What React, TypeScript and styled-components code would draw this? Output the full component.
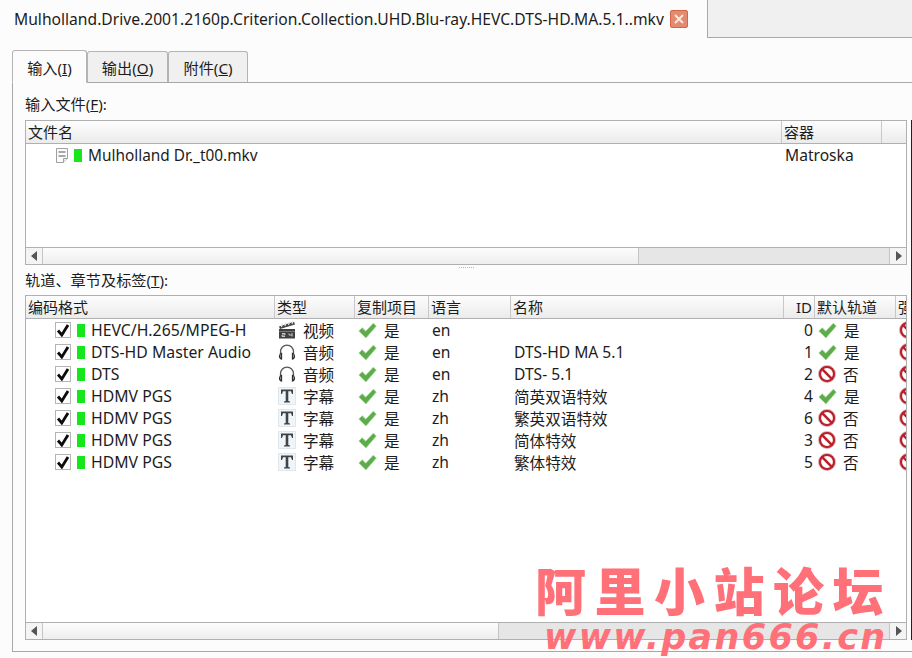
import React from "react";
import styled, { createGlobalStyle } from "styled-components";

const Global = createGlobalStyle`
  html, body { margin: 0; padding: 0; background: #fcfcfc; }
  body { width: 912px; height: 658px; overflow: hidden; font-family: "Noto Sans", "Noto Sans CJK SC", sans-serif; font-size: 15.5px; color: #1c1c1c; }
  u { text-underline-offset: 1px; }
`;

const Page = styled.div`
  position: relative;
  width: 912px;
  height: 658px;
  overflow: hidden;
  background: #fcfcfc;
`;
const TopBar = styled.div`
  display: flex;
  height: 38px;
`;
const FileTab = styled.div`
  width: 708px;
  box-sizing: border-box;
  display: flex;
  align-items: center;
  gap: 6px;
  padding: 0 0 0 14px;
  border-right: 1px solid #a8a8a8;
  font-size: 15.65px;
  white-space: nowrap;
`;
const TopFill = styled.div`
  flex: 1;
  background: #f0f0f0;
  border-bottom: 1px solid #a8a8a8;
`;
const CloseBox = styled.span`
  width: 18px;
  height: 18px;
  border-radius: 2px;
  background: #e58a6e;
  border: 1px solid #d2654a;
  box-sizing: border-box;
  display: flex;
  align-items: center;
  justify-content: center;
`;
const TabStrip = styled.div`
  display: flex;
  align-items: flex-end;
  height: 44px;
  padding-left: 12px;
`;
const Tab = styled.div<{ $active?: boolean; $w: number }>`
  width: ${(p) => p.$w}px;
  height: ${(p) => (p.$active ? 33 : 31)}px;
  box-sizing: border-box;
  display: flex;
  align-items: center;
  justify-content: center;
  border: 1px solid #b4b4b4;
  border-bottom: ${(p) => (p.$active ? "1px solid #fcfcfc" : "none")};
  border-radius: 3px 3px 0 0;
  background: ${(p) => (p.$active ? "#fcfcfc" : "#f0f0f0")};
  margin-bottom: ${(p) => (p.$active ? -1 : 0)}px;
  position: relative;
  font-size: 15.2px;
`;
const Panel = styled.div`
  margin-left: 12px;
  height: 570px;
  box-sizing: border-box;
  border: 1px solid #a8a8a8;
  border-right: none;
  padding: 11px 5px 0 12px;
`;
const Label = styled.div<{ $h: number }>`
  height: ${(p) => p.$h}px;
  line-height: 21px;
  font-size: 15.2px;
`;
const Table = styled.div<{ $h: number }>`
  height: ${(p) => p.$h}px;
  box-sizing: border-box;
  border: 1px solid #b0b0b0;
  background: #fff;
  display: flex;
  flex-direction: column;
  overflow: hidden;
`;
const Head = styled.div<{ $cols: string }>`
  display: grid;
  grid-template-columns: ${(p) => p.$cols};
  height: 23px;
  flex: none;
  box-sizing: border-box;
  border-bottom: 1px solid #b0b0b0;
  background: linear-gradient(#fdfdfd, #ebebeb);
`;
const HeadCell = styled.div<{ $right?: boolean }>`
  box-sizing: border-box;
  padding: 0 ${(p) => (p.$right ? 2 : 0)}px 0 2px;
  border-right: 1px solid #c8c8c8;
  line-height: 22px;
  font-size: 15px;
  white-space: nowrap;
  overflow: hidden;
  text-align: ${(p) => (p.$right ? "right" : "left")};
  &:last-child { border-right: none; }
`;
const Body = styled.div`
  flex: 1;
  min-height: 0;
`;
const Row = styled.div<{ $cols: string }>`
  display: grid;
  grid-template-columns: ${(p) => p.$cols};
  height: 22px;
  align-items: center;
`;
const Cell = styled.div<{ $right?: boolean }>`
  display: flex;
  align-items: center;
  justify-content: ${(p) => (p.$right ? "flex-end" : "flex-start")};
  padding: 0 ${(p) => (p.$right ? 2 : 0)}px 0 3px;
  white-space: nowrap;
  overflow: hidden;
  font-size: 15.6px;
  height: 22px;
`;
const FileCell = styled(Cell)`
  padding-left: 29px;
  font-size: 15.4px;
  svg { margin-right: 4px; }
`;
const TrackCell = styled(Cell)`
  padding-left: 29px;
  font-size: 15.8px;
`;
const Check = styled.span`
  width: 16px;
  height: 16px;
  box-sizing: border-box;
  border: 1px solid #b5b5b5;
  background: #fff;
  display: flex;
  align-items: center;
  justify-content: center;
  margin-right: 6px;
`;
const Green = styled.span`
  width: 8px;
  height: 13px;
  background: #16e61c;
  margin-right: 6px;
  flex: none;
`;
const IconCell = styled(Cell)`
  gap: 7px;
  svg { flex: none; }
`;
const Scroll = styled.div<{ $thumb: number }>`
  height: 17px;
  flex: none;
  box-sizing: border-box;
  border-top: 1px solid #b0b0b0;
  display: grid;
  grid-template-columns: 17px ${(p) => p.$thumb}px 1fr 17px;
  background: #e6e6e6;
`;
const ArrowBtn = styled.div<{ $left?: boolean }>`
  background: #f4f4f4;
  display: flex;
  align-items: center;
  justify-content: center;
  ${(p) => (p.$left ? "border-right" : "border-left")}: 1px solid #c4c4c4;
`;
const Thumb = styled.div`
  background: linear-gradient(#fcfcfc, #eeeeee);
  border-right: 1px solid #c4c4c4;
`;
const SplitDots = styled.div`
  height: 5px;
  display: flex;
  justify-content: center;
  align-items: center;
  gap: 1px;
  span { width: 1px; height: 1px; background: #b8b8b8; }
`;
const EdgeLine = styled.div`
  position: absolute;
  right: 0;
  top: 120px;
  width: 1px;
  height: 520px;
  background: #222;
`;
const MarkCn = styled.div`
  position: absolute;
  left: 535px;
  top: 564px;
  font-family: "Noto Sans CJK SC", sans-serif;
  font-weight: 900;
  font-size: 51px;
  line-height: 50px;
  letter-spacing: 8.500px;
  color: #ff7079;
  white-space: nowrap;
`;
const MarkUrl = styled.div`
  position: absolute;
  left: 544px;
  top: 618px;
  font-family: "DejaVu Sans", sans-serif;
  font-style: italic;
  font-weight: 700;
  font-size: 35px;
  line-height: 38px;
  letter-spacing: 2.300px;
  color: #ff7079;
  white-space: nowrap;
`;

const Tri = ({ left }: { left?: boolean }) => (
  <svg width="7" height="10" viewBox="0 0 7 10">
    <path d={left ? "M6 0v10L0 5z" : "M1 0v10l6-5z"} fill="#555" />
  </svg>
);
const X = () => (
  <svg width="12" height="12" viewBox="0 0 12 12">
    <path d="M2 2l8 8M10 2l-8 8" stroke="#fbe9dc" strokeWidth="2" />
  </svg>
);
const FileIcon = () => (
  <svg width="15" height="17" viewBox="0 0 15 17">
    <path d="M1.500 1.500h11v10l-4 4h-7z" fill="#fafafa" stroke="#a0a0a0" />
    <path d="M3.500 5h7M3.500 9h7" stroke="#a8a8a8" strokeWidth="2" />
    <path d="M8.500 15.500v-4h4" fill="#eee" stroke="#a0a0a0" />
  </svg>
);
const Tick = () => (
  <svg width="14" height="14" viewBox="0 0 14 14">
    <path d="M2 7.500l3.800 4.500L12 2" fill="none" stroke="#0c0c0c" strokeWidth="2.800" />
  </svg>
);
const Yes = () => (
  <svg width="19" height="17" viewBox="0 0 18 16">
    <path d="M.8 8.500l3.200-3 3.300 3.200L14.500 1.200 17.300 3.800 7.500 15z" fill="#5cab4c" stroke="#9ccf8c" strokeWidth=".8" />
  </svg>
);
const No = () => (
  <svg width="18" height="18" viewBox="0 0 18 18">
    <circle cx="9" cy="9" r="7.200" fill="#fff" stroke="#b8222c" strokeWidth="2.600" />
    <path d="M4.200 4.200l9.600 9.600" stroke="#b8222c" strokeWidth="2.600" />
    <circle cx="9" cy="9" r="8.600" fill="none" stroke="#e8b8bc" strokeWidth=".8" />
  </svg>
);
const Video = () => (
  <svg width="18" height="18" viewBox="0 0 18 18">
    <path d="M1 5.500L16 .8l1 2.700L2 8z" fill="#444" />
    <path d="M3.500 6l1-3.500M7 5l1-3.500M10.500 4l1-3M14 3l1-2.500" stroke="#e0e0e0" strokeWidth="1.200" />
    <rect x="1" y="8" width="16" height="9.500" fill="#3f3f3f" />
    <path d="M1 10.500h16" stroke="#777" />
    <path d="M4 12.500h3v1.500H4v1.500h3M11 12.500v1.500h3M14 12v3.500" stroke="#c8c8c8" fill="none" />
  </svg>
);
const Audio = () => (
  <svg width="18" height="18" viewBox="0 0 20 20">
    <path d="M2.800 12V9.500a7.200 7.200 0 0 1 14.400 0V12" fill="none" stroke="#555" strokeWidth="1.400" />
    <path d="M4.600 10.500v8C2.500 18.500 1 17 1 15s1.500-4.500 3.600-4.500zM15.400 10.500v8c2.100 0 3.600-1.500 3.600-3.500s-1.500-4.500-3.600-4.500z" fill="#2e2e2e" />
    <path d="M2.800 13v3M17.200 13v3" stroke="#999" />
  </svg>
);
const Sub = () => (
  <svg width="18" height="18" viewBox="0 0 18 18">
    <rect x=".5" y=".5" width="17" height="17" fill="#f0f5fa" stroke="#dfe6ee" />
    <path d="M3 2.500h12v4.500h-1l-1-2.800H10.300V14l1.700 .5V15.500H6v-1l1.700-.5V4.200H5L4 7H3z" fill="#3e4448" />
  </svg>
);

const c1 = "756px 100px 1fr";
const c2 = "249px 80px 74px 82px 273px 31px 81px 1fr";

type Track = { codec: string; kind: "v" | "a" | "s"; lang: string; name: string; id: string; def: boolean };
const tracks: Track[] = [
  { codec: "HEVC/H.265/MPEG-H", kind: "v", lang: "en", name: "", id: "0", def: true },
  { codec: "DTS-HD Master Audio", kind: "a", lang: "en", name: "DTS-HD MA 5.1", id: "1", def: true },
  { codec: "DTS", kind: "a", lang: "en", name: "DTS- 5.1", id: "2", def: false },
  { codec: "HDMV PGS", kind: "s", lang: "zh", name: "简英双语特效", id: "4", def: true },
  { codec: "HDMV PGS", kind: "s", lang: "zh", name: "繁英双语特效", id: "6", def: false },
  { codec: "HDMV PGS", kind: "s", lang: "zh", name: "简体特效", id: "3", def: false },
  { codec: "HDMV PGS", kind: "s", lang: "zh", name: "繁体特效", id: "5", def: false },
];
const kinds = {
  v: { icon: <Video />, label: "视频" },
  a: { icon: <Audio />, label: "音频" },
  s: { icon: <Sub />, label: "字幕" },
};

export default function App() {
  return (
    <Page>
      <Global />
      <TopBar>
        <FileTab>
          Mulholland.Drive.2001.2160p.Criterion.Collection.UHD.Blu-ray.HEVC.DTS-HD.MA.5.1..mkv
          <CloseBox><X /></CloseBox>
        </FileTab>
        <TopFill />
      </TopBar>
      <TabStrip>
        <Tab $active $w={75}><span>输入(<u>I</u>)</span></Tab>
        <Tab $w={81}><span>输出(<u>O</u>)</span></Tab>
        <Tab $w={80}><span>附件(<u>C</u>)</span></Tab>
      </TabStrip>
      <Panel>
        <Label $h={26}>输入文件(<u>F</u>):</Label>
        <Table $h={145}>
          <Head $cols={c1}>
            <HeadCell>文件名</HeadCell>
            <HeadCell>容器</HeadCell>
            <HeadCell />
          </Head>
          <Body>
            <Row $cols={c1}>
              <FileCell><FileIcon /><Green />Mulholland Dr._t00.mkv</FileCell>
              <Cell>Matroska</Cell>
            </Row>
          </Body>
          <Scroll $thumb={596}>
            <ArrowBtn $left><Tri left /></ArrowBtn>
            <Thumb />
            <div />
            <ArrowBtn><Tri /></ArrowBtn>
          </Scroll>
        </Table>
        <SplitDots><span /><span /><span /><span /><span /><span /><span /><span /></SplitDots>
        <Label $h={25}>轨道、章节及标签(<u>T</u>):</Label>
        <Table $h={345}>
          <Head $cols={c2}>
            <HeadCell>编码格式</HeadCell>
            <HeadCell>类型</HeadCell>
            <HeadCell>复制项目</HeadCell>
            <HeadCell>语言</HeadCell>
            <HeadCell>名称</HeadCell>
            <HeadCell $right>ID</HeadCell>
            <HeadCell>默认轨道</HeadCell>
            <HeadCell>强制</HeadCell>
          </Head>
          <Body>
            {tracks.map((t) => (
              <Row $cols={c2} key={t.id}>
                <TrackCell><Check><Tick /></Check><Green />{t.codec}</TrackCell>
                <IconCell>{kinds[t.kind].icon}{kinds[t.kind].label}</IconCell>
                <IconCell><Yes />是</IconCell>
                <Cell>{t.lang}</Cell>
                <Cell>{t.name}</Cell>
                <Cell $right>{t.id}</Cell>
                <IconCell>{t.def ? <Yes /> : <No />}{t.def ? "是" : "否"}</IconCell>
                <IconCell><No /></IconCell>
              </Row>
            ))}
          </Body>
          <Scroll $thumb={456}>
            <ArrowBtn $left><Tri left /></ArrowBtn>
            <Thumb />
            <div />
            <ArrowBtn><Tri /></ArrowBtn>
          </Scroll>
        </Table>
      </Panel>
      <EdgeLine />
      <MarkCn>阿里小站论坛</MarkCn>
      <MarkUrl>www.pan666.cn</MarkUrl>
    </Page>
  );
}
